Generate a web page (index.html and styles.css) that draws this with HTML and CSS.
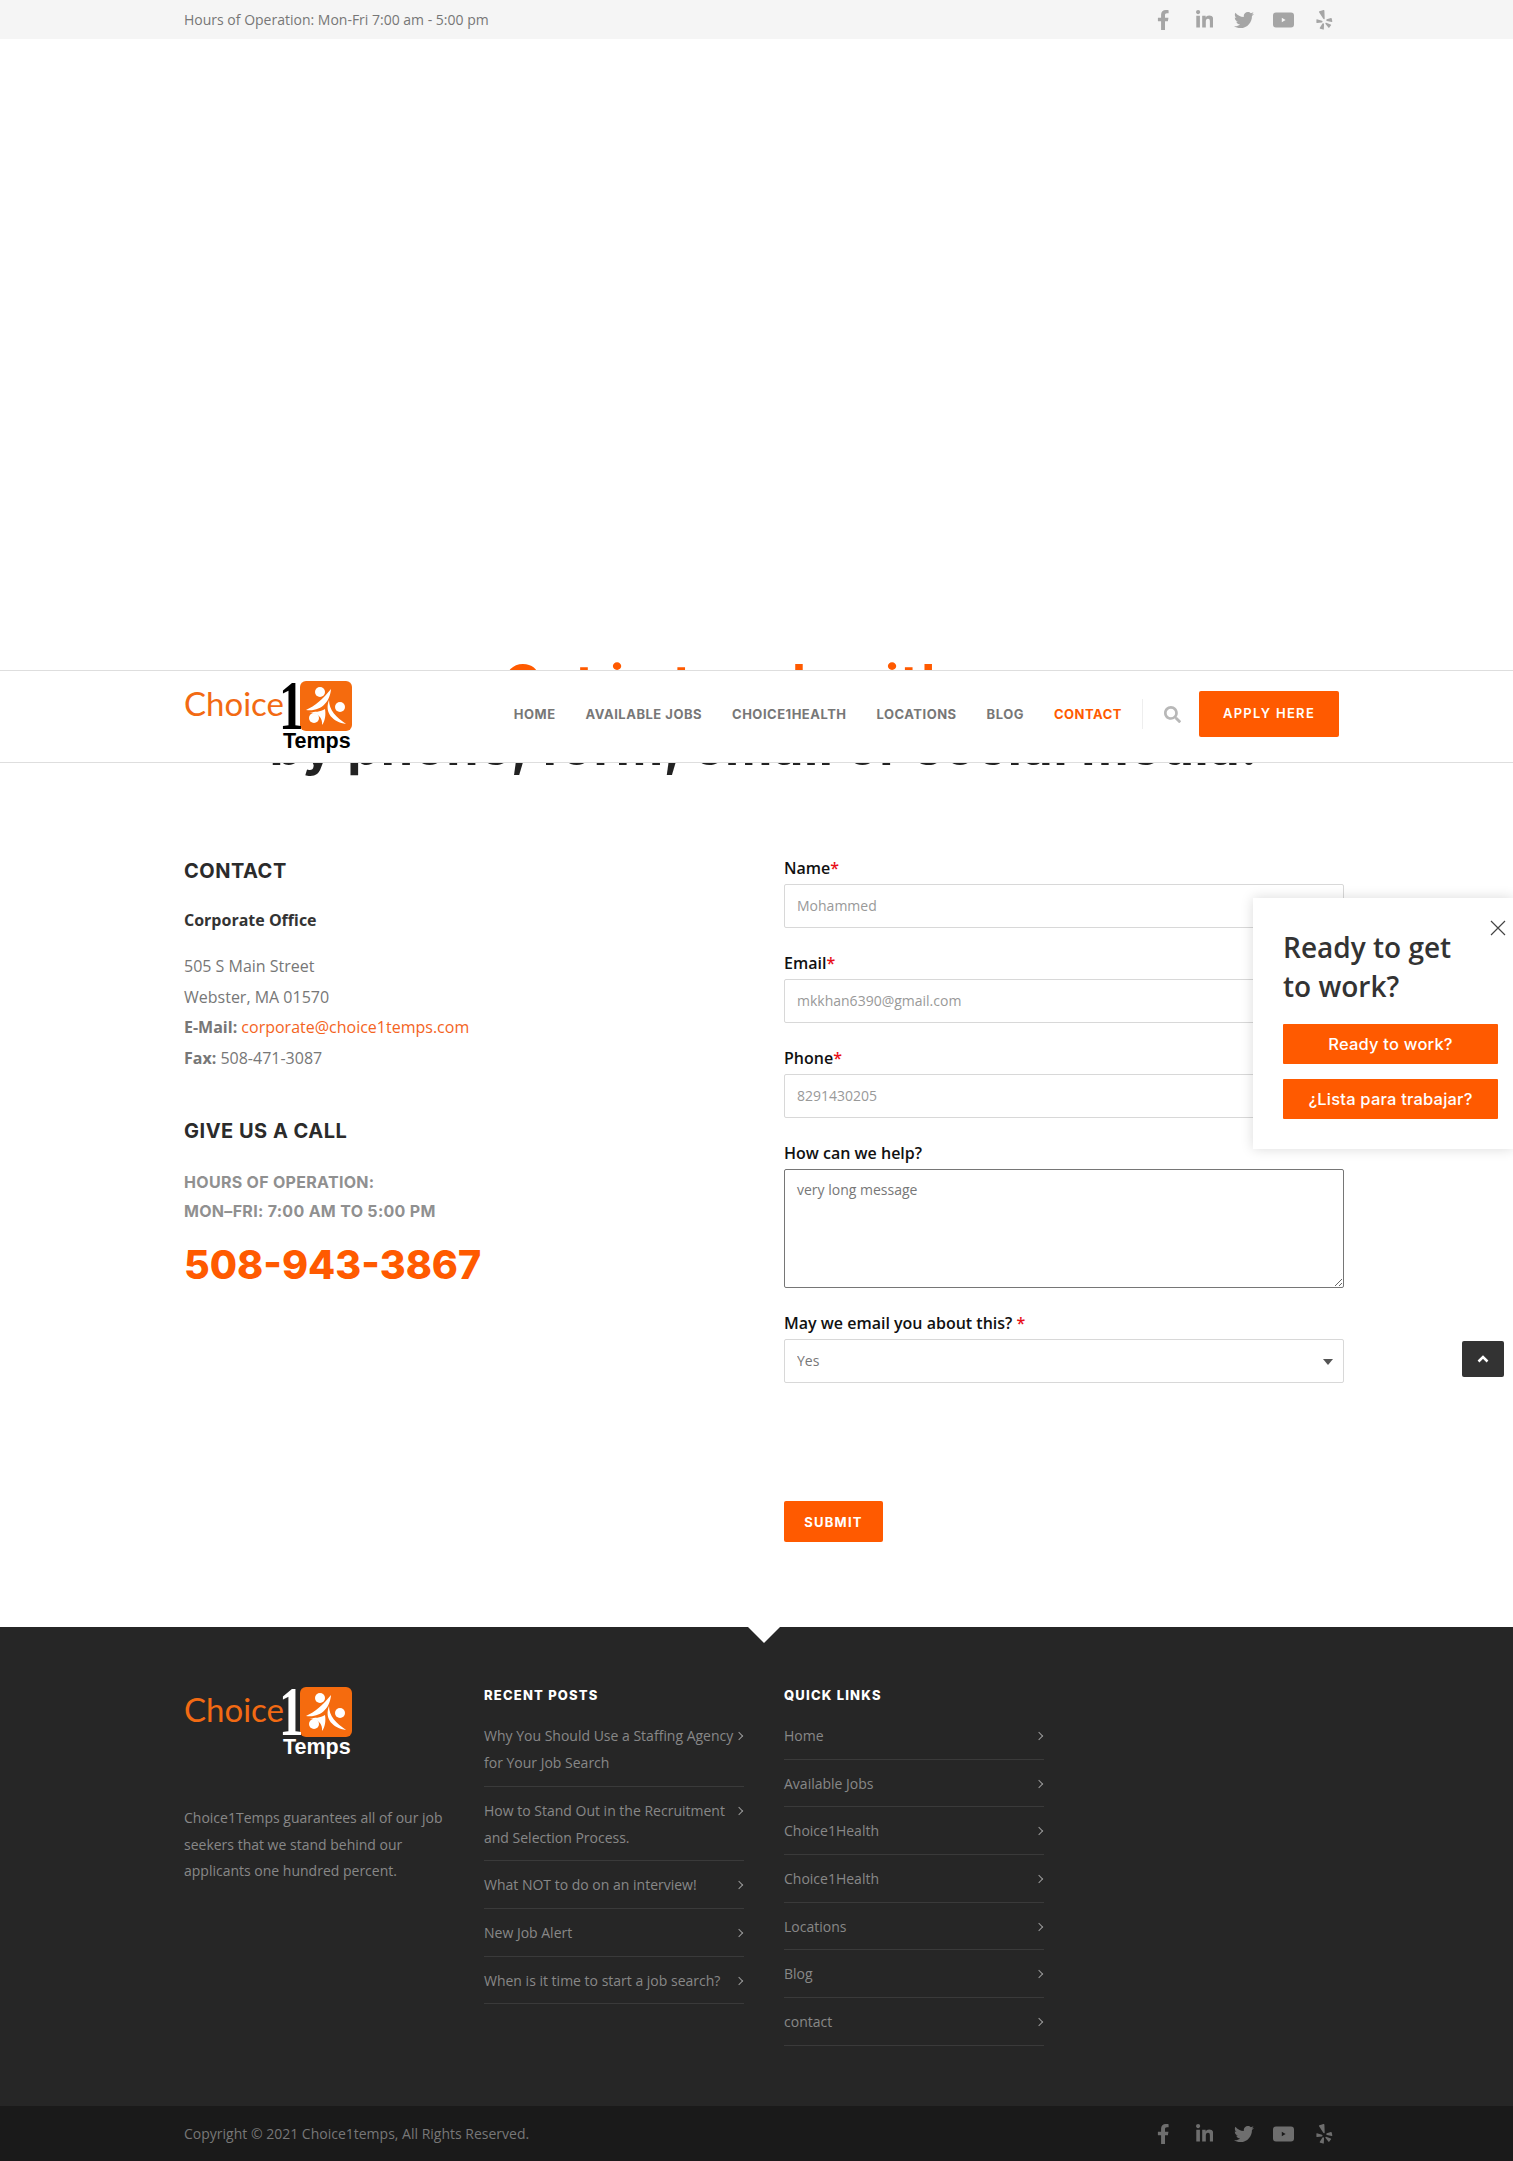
FILE: index.html
```html
<!DOCTYPE html>
<html lang="en">
  <head>
    <meta charset="UTF-8" />
    <meta name="viewport" content="width=device-width, initial-scale=1.0" />
    <title>Contact - Choice1Temps</title>
    <link rel="stylesheet" href="styles.css">
  </head>
  <body>
    <svg class="icon-defs" aria-hidden="true">
      <symbol id="i-fb" viewBox="0 0 320 512"><path d="M279.14 288l14.22-92.66h-88.91v-60.13c0-25.35 12.42-50.06 52.24-50.06h40.42V6.26S260.43 0 225.36 0c-73.22 0-121.08 44.38-121.08 124.72v70.62H22.89V288h81.39v224h100.17V288z"/></symbol>
      <symbol id="i-in" viewBox="0 0 448 512"><path d="M100.28 448H7.4V148.9h92.88zM53.79 108.1C24.09 108.1 0 83.5 0 53.8a53.79 53.79 0 0 1 107.58 0c0 29.7-24.1 54.3-53.79 54.3zM447.9 448h-92.68V302.4c0-34.7-.7-79.2-48.29-79.2-48.29 0-55.69 37.7-55.69 76.7V448h-92.78V148.9h89.08v40.8h1.3c12.4-23.5 42.69-48.3 87.88-48.3 94 0 111.28 61.9 111.28 142.3V448z"/></symbol>
      <symbol id="i-tw" viewBox="0 0 512 512"><path d="M459.37 151.716c.325 4.548.325 9.097.325 13.645 0 138.72-105.583 298.558-298.558 298.558-59.452 0-114.68-17.219-161.137-47.106 8.447.974 16.568 1.299 25.34 1.299 49.055 0 94.213-16.568 130.274-44.832-46.132-.975-84.792-31.188-98.112-72.772 6.498.974 12.995 1.624 19.818 1.624 9.421 0 18.843-1.3 27.614-3.573-48.081-9.747-84.143-51.98-84.143-102.985v-1.299c13.969 7.797 30.214 12.67 47.431 13.319-28.264-18.843-46.781-51.005-46.781-87.391 0-19.492 5.197-37.36 14.294-52.954 51.655 63.675 129.3 105.258 216.365 109.807-1.624-7.797-2.599-15.918-2.599-24.04 0-57.828 46.782-104.934 104.934-104.934 30.213 0 57.502 12.67 76.67 33.137 23.715-4.548 46.456-13.32 66.599-25.34-7.798 24.366-24.366 44.833-46.132 57.827 21.117-2.273 41.584-8.122 60.426-16.243-14.292 20.791-32.161 39.308-52.628 54.253z"/></symbol>
      <symbol id="i-yt" viewBox="0 0 21 15"><path fill-rule="evenodd" d="M3 0h15a3 3 0 0 1 3 3v9a3 3 0 0 1-3 3H3a3 3 0 0 1-3-3V3a3 3 0 0 1 3-3zM8.8 5.2v4.6l3.8-2.3z"/></symbol>
      <symbol id="i-yelp" viewBox="0 0 17 21"><path d="M3.2 1.2 7.4 0c.6-.1 1 .2 1 .8l.3 8c0 1-1 1.3-1.5.5L2.8 2.4c-.3-.5-.1-1 .4-1.2zM.6 9.7l5.2 1.7c.9.3.8 1.5-.1 1.6l-5 .7c-.4 0-.7-.2-.7-.6v-2.8c0-.5.2-.7.6-.6zM6.4 14.3c.7-.6 1.6-.1 1.6.8l-.2 4.9c0 .5-.4.8-.8.6l-3-.9c-.5-.1-.7-.6-.4-1zM10.3 13.5l4.7 1.6c.4.1.6.6.4 1l-1.8 2.4c-.3.4-.8.4-1 0l-3-3.9c-.6-.8.1-1.5.7-1.1zM15.2 8.3c.4-.1.8.1.9.5l.6 3c.1.5-.2.8-.7.7l-5-1c-.9-.2-1-1.4-.1-1.8z"/></symbol>
      <symbol id="i-mark" viewBox="0 0 52 50">
        <rect width="52" height="50" rx="6" fill="#f56b0e"/>
        <g fill="#fff">
          <circle cx="20" cy="11" r="5"/>
          <circle cx="40" cy="26" r="5"/>
          <circle cx="14" cy="37" r="5"/>
          <path d="M6 29C15 25 23 18 31 8 30 21 21 31 6 29z"/>
          <path d="M29 19C29 29 36 36 46 43 33 41 24 32 29 19z"/>
          <path d="M9 31C15 31 20 31 25 28 26 34 25 40 22 44 23 37 18 32 9 31z"/>
        </g>
      </symbol>
    </svg>

    <div class="topbar">
      <div class="container topbar-inner">
        <span>Hours of Operation: Mon-Fri 7:00 am - 5:00 pm</span>
        <div class="social">
          <svg class="s-fb"><use href="#i-fb"/></svg>
          <svg class="s-in"><use href="#i-in"/></svg>
          <svg class="s-tw"><use href="#i-tw"/></svg>
          <svg class="s-yt"><use href="#i-yt"/></svg>
          <svg class="s-yelp"><use href="#i-yelp"/></svg>
        </div>
      </div>
    </div>

    <header class="site-header">
      <div class="container header-inner">
        <a class="logo">
          <span class="logo-word">Choice</span>
          <span class="logo-right">
            <span class="logo-top">
              <span class="logo-one">1</span>
              <svg class="logo-mark"><use href="#i-mark"/></svg>
            </span>
            <span class="logo-temps">Temps</span>
          </span>
        </a>
        <nav class="nav">
          <a>Home</a>
          <a>Available Jobs</a>
          <a>Choice1Health</a>
          <a>Locations</a>
          <a>Blog</a>
          <a class="active">Contact</a>
        </nav>
        <span class="nav-divider"></span>
        <svg class="nav-search" viewBox="0 0 512 512"><path d="M505 442.7L405.3 343c-4.5-4.5-10.6-7-17-7H372c27.6-35.3 44-79.7 44-128C416 93.1 322.9 0 208 0S0 93.1 0 208s93.1 208 208 208c48.3 0 92.7-16.4 128-44v16.3c0 6.4 2.5 12.5 7 17l99.7 99.7c9.4 9.4 24.6 9.4 33.9 0l28.3-28.3c9.4-9.4 9.4-24.6.1-34zM208 336c-70.7 0-128-57.2-128-128 0-70.7 57.2-128 128-128 70.7 0 128 57.2 128 128 0 70.7-57.2 128-128 128z"/></svg>
        <a class="btn-apply">Apply Here</a>
      </div>
    </header>

    <section class="hero">
      <h1><span class="hero-accent">Get in touch with</span><br />by phone, form, email or social media.</h1>
    </section>

    <section class="contact container">
      <div class="contact-info">
        <h3>Contact</h3>
        <h4>Corporate Office</h4>
        <p class="address">
          505 S Main Street<br />
          Webster, MA 01570<br />
          <b>E-Mail:</b> <a>corporate@choice1temps.com</a><br />
          <b>Fax:</b> 508-471-3087
        </p>
        <h3 class="call-title">Give us a call</h3>
        <p class="hours">Hours of Operation:<br />Mon–Fri: 7:00 am to 5:00 pm</p>
        <a class="phone">508-943-3867</a>
      </div>

      <form class="contact-form">
        <div class="form-group">
          <label for="name">Name<em>*</em></label>
          <input type="text" id="name" value="Mohammed" />
        </div>
        <div class="form-group">
          <label for="email">Email<em>*</em></label>
          <input type="text" id="email" value="mkkhan6390@gmail.com" />
        </div>
        <div class="form-group">
          <label for="phone">Phone<em>*</em></label>
          <input type="text" id="phone" value="8291430205" />
        </div>
        <div class="form-group">
          <label for="help">How can we help?</label>
          <textarea id="help">very long message</textarea>
        </div>
        <div class="form-group">
          <label for="may">May we email you about this? <em>*</em></label>
          <div class="select-wrap">
            <select id="may"><option>Yes</option><option>No</option></select>
          </div>
        </div>
        <button type="button" class="btn-submit">Submit</button>
      </form>
    </section>

    <footer class="footer">
      <span class="footer-notch"></span>
      <div class="container footer-grid">
        <div>
          <a class="logo logo-dark">
            <span class="logo-word">Choice</span>
            <span class="logo-right">
              <span class="logo-top">
                <span class="logo-one">1</span>
                <svg class="logo-mark"><use href="#i-mark"/></svg>
              </span>
              <span class="logo-temps">Temps</span>
            </span>
          </a>
          <p class="footer-about">Choice1Temps guarantees all of our job seekers that we stand behind our applicants one hundred percent.</p>
        </div>
        <div>
          <h5>Recent Posts</h5>
          <ul class="footer-list">
            <li><a>Why You Should Use a Staffing Agency for Your Job Search</a><i></i></li>
            <li><a>How to Stand Out in the Recruitment and Selection Process.</a><i></i></li>
            <li><a>What NOT to do on an interview!</a><i></i></li>
            <li><a>New Job Alert</a><i></i></li>
            <li><a>When is it time to start a job search?</a><i></i></li>
          </ul>
        </div>
        <div>
          <h5>Quick Links</h5>
          <ul class="footer-list">
            <li><a>Home</a><i></i></li>
            <li><a>Available Jobs</a><i></i></li>
            <li><a>Choice1Health</a><i></i></li>
            <li><a>Choice1Health</a><i></i></li>
            <li><a>Locations</a><i></i></li>
            <li><a>Blog</a><i></i></li>
            <li><a>contact</a><i></i></li>
          </ul>
        </div>
      </div>
      <div class="footer-bottom">
        <div class="container topbar-inner">
          <span>Copyright © 2021 Choice1temps, All Rights Reserved.</span>
          <div class="social">
            <svg class="s-fb"><use href="#i-fb"/></svg>
            <svg class="s-in"><use href="#i-in"/></svg>
            <svg class="s-tw"><use href="#i-tw"/></svg>
            <svg class="s-yt"><use href="#i-yt"/></svg>
            <svg class="s-yelp"><use href="#i-yelp"/></svg>
          </div>
        </div>
      </div>
    </footer>

    <aside class="popup">
      <svg class="popup-close" viewBox="0 0 16 16"><path d="M1 1l14 14M15 1L1 15"/></svg>
      <h2>Ready to get to work?</h2>
      <a class="popup-btn">Ready to work?</a>
      <a class="popup-btn">¿Lista para trabajar?</a>
    </aside>

    <a class="to-top"><svg viewBox="0 0 12 8"><path d="M1.5 6.5L6 2l4.500 4.500"/></svg></a>
  </body>
</html>
```

FILE: styles.css
```css
* {
  box-sizing: border-box;
}

body {
  margin: 0;
  position: relative;
  font-family: "Open Sans", sans-serif;
  font-size: 14px;
  color: #777;
  background-color: white;
}

.icon-defs {
  display: none;
}

.container {
  width: 1160px;
  margin-left: 184px;
}

/* top bar */
.topbar {
  height: 39px;
  background-color: #f5f5f5;
  color: #777;
}

.topbar-inner {
  display: flex;
  justify-content: space-between;
  align-items: center;
  height: 100%;
}

.social {
  display: flex;
  align-items: center;
  fill: #a5a5a5;
  padding-right: 11.5px;
}

.social svg {
  display: block;
  height: 20px;
  flex: none;
}

.s-fb {
  width: 12.5px;
  margin-right: 26px;
}

.s-in {
  width: 17.5px;
  margin-right: 21px;
}

.s-tw {
  width: 20px;
  margin-right: 19px;
}

.s-yt {
  width: 21px;
  margin-right: 21.5px;
}

.s-yelp {
  width: 17px;
}

/* sticky header */
.site-header {
  position: absolute;
  top: 670px;
  left: 0;
  right: 0;
  height: 93px;
  background-color: white;
  border-top: 1px solid #dedede;
  border-bottom: 1px solid #dedede;
  z-index: 5;
}

.header-inner {
  display: flex;
  align-items: flex-start;
  width: 1155px;
  padding-top: 20px;
}

.logo {
  display: flex;
  width: 168px;
  height: 70px;
  margin-top: -10px;
  margin-right: auto;
}

.logo-word {
  width: 99px;
  font-family: "Lato", sans-serif;
  font-size: 33px;
  line-height: 44px;
  color: #f26a13;
}

.logo-right {
  display: block;
  width: 69px;
}

.logo-top {
  display: flex;
  height: 50px;
}

.logo-one {
  width: 17px;
  margin-left: -4px;
  margin-right: 4px;
  font-family: "Liberation Serif", serif;
  font-weight: bold;
  font-size: 70px;
  line-height: 50px;
  color: black;
  transform: scaleX(0.7);
  transform-origin: left center;
}

.logo-mark {
  width: 52px;
  height: 50px;
}

.logo-temps {
  display: block;
  font-family: "Liberation Sans", sans-serif;
  font-weight: bold;
  font-size: 21.5px;
  line-height: 20px;
  color: black;
}

.logo-dark .logo-one,
.logo-dark .logo-temps {
  color: white;
}

.nav {
  display: flex;
  gap: 30px;
  height: 46px;
  align-items: center;
}

.nav a {
  font-family: "Inter", sans-serif;
  font-weight: 700;
  font-size: 13px;
  letter-spacing: 0.5px;
  text-transform: uppercase;
  color: #777;
}

.nav a.active {
  color: #ff5a00;
}

.nav-divider {
  width: 1px;
  height: 30px;
  margin: 8px 21px 0 20px;
  background-color: #eee;
}

.nav-search {
  width: 17px;
  height: 17px;
  margin-top: 15px;
  margin-right: 18px;
  fill: #b8b8b8;
}

.btn-apply {
  width: 140px;
  height: 46px;
  line-height: 45px;
  text-align: center;
  background-color: #ff5a00;
  border-radius: 2px;
  color: white;
  font-family: "Inter", sans-serif;
  font-weight: 600;
  font-size: 13px;
  letter-spacing: 1.3px;
  text-transform: uppercase;
}

/* hero heading, mostly under the header */
.hero {
  padding-top: 612.5px;
}

.hero h1 {
  margin: 0;
  font-family: "Inter", sans-serif;
  font-weight: 700;
  font-size: 52px;
  line-height: 63px;
  letter-spacing: 0.7px;
  text-align: center;
  color: #222;
  width: 1513px;
  padding-left: 15px;
}

.hero-accent {
  margin-right: 70px;
  letter-spacing: 1.4px;
  color: #ff5a00;
}

/* contact */
.contact {
  display: grid;
  grid-template-columns: 600px 560px;
  padding-top: 79.5px;
  padding-bottom: 85px;
}

.contact-info h3 {
  margin: 0;
  font-family: "Inter", sans-serif;
  font-weight: 700;
  font-size: 20px;
  line-height: 28px;
  letter-spacing: 0.5px;
  text-transform: uppercase;
  color: #2b2b2b;
}

.contact-info h4 {
  margin: 23px 0 0;
  font-size: 16px;
  font-weight: 700;
  line-height: 24px;
  color: #333;
}

.address {
  margin: 19px 0 0;
  font-size: 16px;
  line-height: 30.6px;
  color: #777;
}

.address a {
  color: #f4641e;
}

.contact-info .call-title {
  margin-top: 44px;
}

.hours {
  margin: 23px 0 0;
  font-family: "Inter", sans-serif;
  font-weight: 700;
  font-size: 16px;
  line-height: 29px;
  letter-spacing: 0.3px;
  text-transform: uppercase;
  color: #909090;
}

.phone {
  display: block;
  margin-top: 14px;
  font-family: "Inter", sans-serif;
  font-weight: 800;
  font-size: 39.5px;
  line-height: 50px;
  color: #ff5a00;
}

/* form */
.form-group {
  margin-bottom: 24px;
}

.form-group label {
  display: block;
  margin-bottom: 5px;
  font-size: 16px;
  font-weight: 600;
  line-height: 22px;
  color: #111;
}

.form-group em {
  font-style: normal;
  color: #e8101a;
}

.form-group input,
.form-group select,
.form-group textarea {
  display: block;
  width: 100%;
  height: 44px;
  padding: 0 12px 2px;
  border: 1px solid #d8d8d8;
  border-radius: 2px;
  background-color: white;
  font-family: "Open Sans", sans-serif;
  font-size: 14px;
  color: #999;
}

.form-group textarea {
  height: 119px;
  padding: 9px 12px;
  border: 1px solid #767676;
  line-height: 22px;
  color: #777;
}

.form-group select {
  appearance: none;
  color: #777;
}

.select-wrap {
  position: relative;
}

.select-wrap::after {
  content: "";
  position: absolute;
  top: 20px;
  right: 11px;
  border-top: 6px solid #555;
  border-left: 5px solid transparent;
  border-right: 5px solid transparent;
}

.btn-submit {
  display: block;
  width: 99px;
  height: 41px;
  margin-top: 118px;
  padding: 0;
  border: none;
  border-radius: 2px;
  background-color: #ff5a00;
  color: white;
  font-family: "Inter", sans-serif;
  font-weight: 700;
  font-size: 13px;
  letter-spacing: 1.2px;
  text-transform: uppercase;
}

/* footer */
.footer {
  position: relative;
  background-color: #262626;
}

.footer-notch {
  position: absolute;
  top: 0;
  left: 748px;
  border-top: 16px solid white;
  border-left: 16px solid transparent;
  border-right: 16px solid transparent;
}

.footer-grid {
  display: grid;
  grid-template-columns: 260px 260px 260px;
  gap: 40px;
  height: 479px;
  padding-top: 60px;
}

.footer .logo {
  margin-top: 0;
  margin-right: 0;
}

.footer-about {
  margin: 48px 0 0;
  line-height: 26.6px;
  color: #888;
}

.footer h5 {
  margin: -1px 0 0;
  font-family: "Inter", sans-serif;
  font-weight: 800;
  font-size: 13px;
  line-height: 18px;
  letter-spacing: 1.2px;
  text-transform: uppercase;
  color: white;
}

.footer-list {
  margin: 8px 0 0;
  padding: 0;
  list-style: none;
}

.footer-list li {
  display: flex;
  justify-content: space-between;
  padding: 10px 0 9.7px;
  border-bottom: 1px solid #3a3a3a;
  line-height: 27px;
  color: #888;
}

.footer-list a {
  flex: 1;
}

.footer-list i {
  flex: none;
  width: 6px;
  height: 6px;
  margin: 11px 2px 0 0;
  border-top: 1px solid #999;
  border-right: 1px solid #999;
  transform: rotate(45deg);
}

.footer-bottom {
  height: 55px;
  background-color: #1a1a1a;
  color: #777;
}

.footer-bottom .social {
  fill: #6e6e6e;
}

/* floating popup */
.popup {
  position: absolute;
  top: 898px;
  left: 1253px;
  width: 260px;
  height: 251px;
  padding: 30px 15px 0 30px;
  background-color: white;
  box-shadow: 0 0 12px rgba(0, 0, 0, 0.15);
  z-index: 6;
}

.popup h2 {
  margin: 0 0 19px;
  font-size: 28px;
  font-weight: 600;
  line-height: 38.5px;
  width: 190px;
  color: #333;
}

.popup-btn {
  display: block;
  height: 40px;
  margin-bottom: 15px;
  border-radius: 1px;
  background-color: #ff5a00;
  color: white;
  font-family: "Inter", sans-serif;
  font-weight: 500;
  font-size: 16.5px;
  letter-spacing: 0.2px;
  line-height: 40px;
  text-align: center;
}

.popup-close {
  position: absolute;
  top: 22px;
  right: 7px;
  width: 16px;
  height: 16px;
  stroke: #444;
  stroke-width: 1.2;
  fill: none;
}

.to-top {
  position: absolute;
  top: 1341px;
  left: 1462px;
  width: 42px;
  height: 36px;
  display: flex;
  align-items: center;
  justify-content: center;
  background-color: #333;
  border-radius: 2px;
}

.to-top svg {
  width: 12px;
  height: 8px;
  stroke: white;
  stroke-width: 2.5;
  fill: none;
}
```
